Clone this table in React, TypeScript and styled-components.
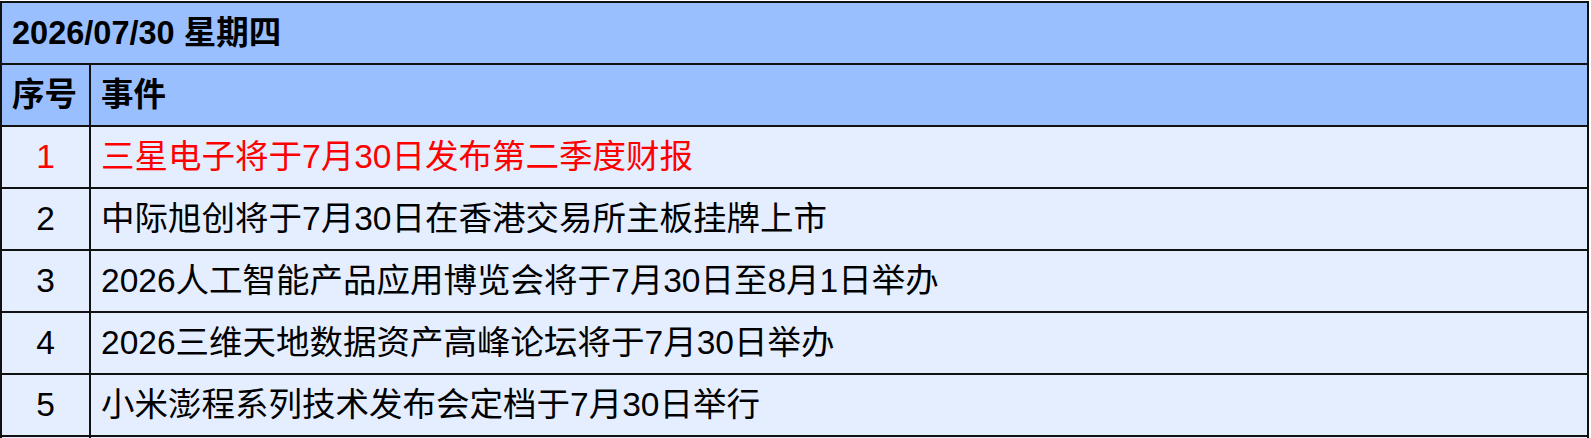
import styled, { createGlobalStyle } from "styled-components";

type EventItem = {
  text: string;
  highlight?: boolean;
};

const events: EventItem[] = [
  { text: "三星电子将于7月30日发布第二季度财报", highlight: true },
  { text: "中际旭创将于7月30日在香港交易所主板挂牌上市" },
  { text: "2026人工智能产品应用博览会将于7月30日至8月1日举办" },
  { text: "2026三维天地数据资产高峰论坛将于7月30日举办" },
  { text: "小米澎程系列技术发布会定档于7月30日举行" },
];

const GlobalStyle = createGlobalStyle`
  body {
    margin: 0;
    background: #ffffff;
    font-family: "Liberation Sans", "Noto Sans CJK SC", sans-serif;
  }
`;

const Table = styled.table`
  width: 1589px;
  margin-top: 1px;
  border-collapse: collapse;
  table-layout: fixed;
  font-size: 33.5px;
  color: #000;

  td,
  th {
    border: 2px solid #111;
    height: 62px;
    box-sizing: border-box;
    padding: 0 10px;
    line-height: 1;
    white-space: nowrap;
  }
`;

const HeadCell = styled.th`
  background: #99bfff;
  text-align: left;
  font-weight: bold;
  font-size: 32.5px;
`;

const Cell = styled.td<{ $center?: boolean; $red?: boolean }>`
  background: #e5eeff;
  text-align: ${(p) => (p.$center ? "center" : "left")};
  color: ${(p) => (p.$red ? "#ff0000" : "#000")};
`;

export default function App() {
  return (
    <>
      <GlobalStyle />
      <Table>
        <colgroup>
          <col style={{ width: 89 }} />
          <col />
        </colgroup>
        <thead>
          <tr>
            <HeadCell colSpan={2}>2026/07/30 星期四</HeadCell>
          </tr>
          <tr>
            <HeadCell>序号</HeadCell>
            <HeadCell>事件</HeadCell>
          </tr>
        </thead>
        <tbody>
          {events.map((e, i) => (
            <tr key={i}>
              <Cell $center $red={e.highlight}>
                {i + 1}
              </Cell>
              <Cell $red={e.highlight}>{e.text}</Cell>
            </tr>
          ))}
          <tr>
            <Cell />
            <Cell />
          </tr>
        </tbody>
      </Table>
    </>
  );
}
